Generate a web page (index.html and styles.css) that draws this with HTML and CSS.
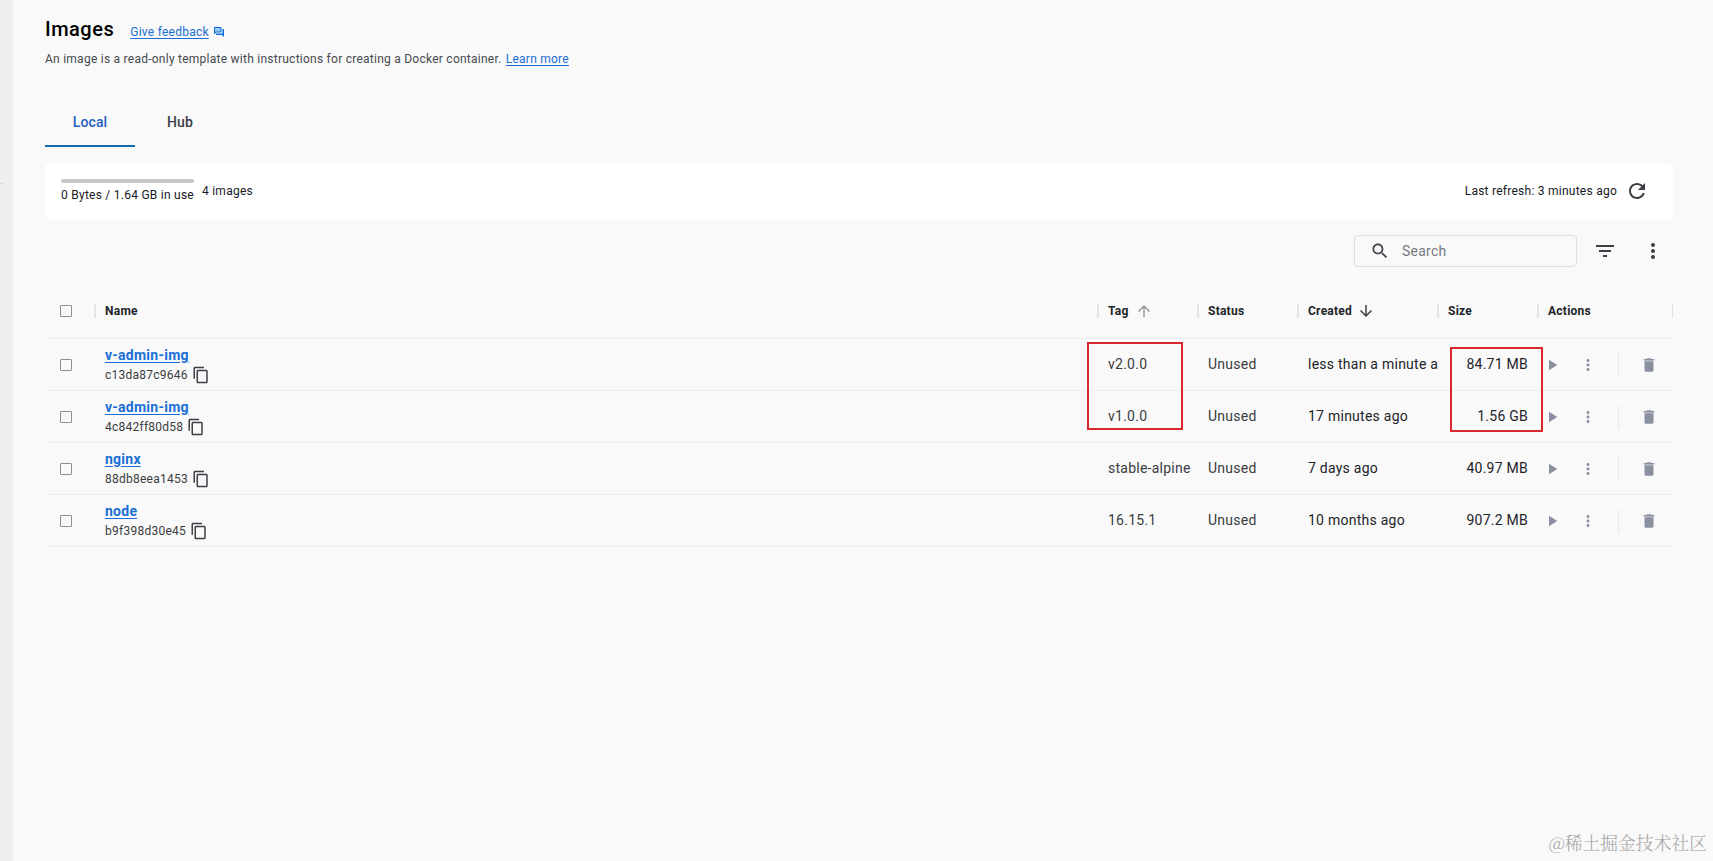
FILE: index.html
```html
<!DOCTYPE html>
<html lang="en">
<head>
    <meta charset="UTF-8">
    <meta name="viewport" content="width=device-width, initial-scale=1.0">
    <title>Images</title>
    <link rel="stylesheet" href="styles.css">
</head>
<body>
    <!-- shared icons -->
    <svg class="sprite" width="0" height="0">
        <symbol id="copy" viewBox="0 0 24 24"><path d="M16 1H4c-1.100 0-2 .9-2 2v14h2V3h12V1zm3 4H8c-1.100 0-2 .9-2 2v14c0 1.100.9 2 2 2h11c1.100 0 2-.9 2-2V7c0-1.100-.9-2-2-2zm0 16H8V7h11v14z"/></symbol>
        <symbol id="more" viewBox="0 0 24 24"><path d="M12 8c1.100 0 2-.9 2-2s-.9-2-2-2-2 .9-2 2 .9 2 2 2zm0 2c-1.100 0-2 .9-2 2s.9 2 2 2 2-.9 2-2-.9-2-2-2zm0 6c-1.100 0-2 .9-2 2s.9 2 2 2 2-.9 2-2-.9-2-2-2z"/></symbol>
        <symbol id="play" viewBox="0 0 24 24"><path d="M8 5v14l11-7z"/></symbol>
        <symbol id="trash" viewBox="0 0 24 24"><path d="M6 19c0 1.100.9 2 2 2h8c1.100 0 2-.9 2-2V7H6v12z"/><path d="M6 6h12v1H6z" opacity=".6"/><path d="M19 4h-3.500l-1-1h-5l-1 1H5v2h14V4z"/></symbol>
        <symbol id="arrow" viewBox="0 0 24 24"><path d="M4 12l1.410 1.410L11 7.830V20h2V7.830l5.580 5.590L20 12l-8-8-8 8z"/></symbol>
    </svg>

    <div class="sidebar"><div class="divider"></div></div>
    <main class="content">
        <div class="title-row">
            <h1>Images</h1>
            <a href="#" class="feedback">Give feedback</a>
            <svg class="feedback-icon" viewBox="0 0 24 24"><path d="M3 3h13v9H6l-3 3z" fill="#9cc8f5"/><path d="M15 4v7H5.170L4 12.170V4h11m1-2H3c-.55 0-1 .45-1 1v14l4-4h10c.55 0 1-.45 1-1V3c0-.55-.45-1-1-1zm5 4h-2v9H6v2c0 .55.45 1 1 1h11l4 4V7c0-.55-.45-1-1-1z"/></svg>
        </div>
        <p class="description">An image is a read-only template with instructions for creating a Docker container. <a href="#">Learn more</a></p>

        <div class="tabs">
            <div class="tab active">Local</div>
            <div class="tab">Hub</div>
        </div>

        <div class="usage">
            <div class="usage-disk">
                <div class="bar"></div>
                <span>0 Bytes / 1.64 GB in use</span>
            </div>
            <span class="count">4 images</span>
            <span class="refresh">Last refresh: 3 minutes ago</span>
            <svg class="icon-24" viewBox="0 0 24 24"><path d="M17.650 6.350C16.200 4.900 14.210 4 12 4c-4.420 0-7.990 3.580-7.990 8s3.570 8 7.990 8c3.730 0 6.840-2.550 7.730-6h-2.080c-.82 2.330-3.040 4-5.650 4-3.310 0-6-2.690-6-6s2.690-6 6-6c1.660 0 3.140.69 4.220 1.780L13 11h7V4l-2.350 2.350z"/></svg>
        </div>

        <div class="toolbar">
            <div class="search">
                <svg viewBox="0 0 24 24"><path d="M15.500 14h-.79l-.28-.27C15.410 12.590 16 11.110 16 9.500 16 5.910 13.090 3 9.500 3S3 5.910 3 9.500 5.910 16 9.500 16c1.610 0 3.090-.59 4.230-1.570l.27.28v.79l5 4.990L20.490 19l-4.990-5zm-6 0C7.010 14 5 11.990 5 9.500S7.010 5 9.500 5 14 7.010 14 9.500 11.990 14 9.500 14z"/></svg>
                <span>Search</span>
            </div>
            <svg class="icon-24 filter" viewBox="0 0 24 24"><path d="M10 18h4v-2h-4v2zM3 6v2h18V6H3zm3 7h12v-2H6v2z"/></svg>
            <svg class="icon-24 menu"><use href="#more"/></svg>
        </div>

        <div class="grid">
            <div class="row head">
                <div class="cell check"><span class="box"></span></div>
                <div class="cell">Name</div>
                <div class="cell">Tag <svg class="sort light"><use href="#arrow"/></svg></div>
                <div class="cell">Status</div>
                <div class="cell">Created <svg class="sort down"><use href="#arrow"/></svg></div>
                <div class="cell">Size</div>
                <div class="cell last">Actions</div>
            </div>
            <div class="row">
                <div class="cell check"><span class="box"></span></div>
                <div class="cell name"><a href="#">v-admin-img</a><div class="hash">c13da87c9646<svg><use href="#copy"/></svg></div></div>
                <div class="cell text">v2.0.0</div>
                <div class="cell text">Unused</div>
                <div class="cell text created">less than a minute a</div>
                <div class="cell text size">84.71 MB</div>
                <div class="cell actions"><svg class="play"><use href="#play"/></svg><svg class="more"><use href="#more"/></svg><i></i><svg class="trash"><use href="#trash"/></svg></div>
            </div>
            <div class="row">
                <div class="cell check"><span class="box"></span></div>
                <div class="cell name"><a href="#">v-admin-img</a><div class="hash">4c842ff80d58<svg><use href="#copy"/></svg></div></div>
                <div class="cell text">v1.0.0</div>
                <div class="cell text">Unused</div>
                <div class="cell text created">17 minutes ago</div>
                <div class="cell text size">1.56 GB</div>
                <div class="cell actions"><svg class="play"><use href="#play"/></svg><svg class="more"><use href="#more"/></svg><i></i><svg class="trash"><use href="#trash"/></svg></div>
            </div>
            <div class="row">
                <div class="cell check"><span class="box"></span></div>
                <div class="cell name"><a href="#">nginx</a><div class="hash">88db8eea1453<svg><use href="#copy"/></svg></div></div>
                <div class="cell text">stable-alpine</div>
                <div class="cell text">Unused</div>
                <div class="cell text created">7 days ago</div>
                <div class="cell text size">40.97 MB</div>
                <div class="cell actions"><svg class="play"><use href="#play"/></svg><svg class="more"><use href="#more"/></svg><i></i><svg class="trash"><use href="#trash"/></svg></div>
            </div>
            <div class="row">
                <div class="cell check"><span class="box"></span></div>
                <div class="cell name"><a href="#">node</a><div class="hash">b9f398d30e45<svg><use href="#copy"/></svg></div></div>
                <div class="cell text">16.15.1</div>
                <div class="cell text">Unused</div>
                <div class="cell text created">10 months ago</div>
                <div class="cell text size">907.2 MB</div>
                <div class="cell actions"><svg class="play"><use href="#play"/></svg><svg class="more"><use href="#more"/></svg><i></i><svg class="trash"><use href="#trash"/></svg></div>
            </div>
            <div class="mark mark-tag"></div>
            <div class="mark mark-size"></div>
        </div>
    </main>
    <div class="watermark">@稀土掘金技术社区</div>
</body>
</html>
```
FILE: styles.css
```css
* {
    box-sizing: border-box;
}

body {
    margin: 0;
    height: 861px;
    display: flex;
    overflow: hidden;
    background-color: #f9f9f9;
    font-family: Roboto, "Liberation Sans", sans-serif;
    font-size: 12px;
    letter-spacing: 0.25px;
    color: #17191e;
}

svg {
    fill: #3c3f45;
    flex: none;
}

a {
    color: #1a6fd6;
    text-underline-offset: 2px;
}

.sprite {
    position: absolute;
}

.sidebar {
    width: 13px;
    padding-top: 183px;
    background-color: #efeff1;
}

.divider {
    width: 4px;
    height: 1px;
    background-color: #dcdde0;
}

.content {
    flex: 1;
    padding: 16px 40px 0 32px;
}

.title-row {
    display: flex;
    align-items: center;
    height: 26px;
}

h1 {
    margin: 0 16px 0 0;
    font-size: 20px;
    font-weight: 500;
    line-height: 26px;
    letter-spacing: 0.5px;
    color: #000;
}

.feedback {
    margin-top: 5px;
}

.feedback-icon {
    width: 12px;
    height: 12px;
    margin: 6px 0 0 4px;
    fill: #086dd7;
}

.description {
    margin: 8px 0 0;
    line-height: 18px;
    color: #46494f;
}

.description a {
    margin-left: 1px;
}

.tabs {
    display: flex;
    height: 48px;
    margin-top: 31px;
    font-size: 14px;
    font-weight: 500;
    letter-spacing: 0.1px;
    color: #393f49;
}

.tab {
    width: 90px;
    line-height: 46px;
    text-align: center;
}

.active {
    color: #2560c5;
    border-bottom: 2px solid #116bac;
}

/* disk usage panel */
.usage {
    display: flex;
    align-items: center;
    height: 57px;
    margin-top: 16px;
    padding: 0 24px 2px 16px;
    border-radius: 6px;
    background-color: #fff;
}

.usage-disk {
    line-height: 16px;
    padding-top: 1px;
}

.bar {
    height: 4px;
    margin-bottom: 4px;
    border-radius: 2px;
    background-color: #c4c8cb;
}

.count {
    margin-left: 8px;
}

.refresh {
    margin-left: auto;
    margin-right: 8px;
}

.icon-24 {
    width: 24px;
    height: 24px;
}

.toolbar {
    display: flex;
    align-items: center;
    justify-content: flex-end;
    height: 32px;
    margin-top: 15px;
    padding-right: 8px;
}

.search {
    display: flex;
    align-items: center;
    width: 223px;
    height: 32px;
    padding-left: 15px;
    border: 1px solid #dcdee2;
    border-radius: 4px;
    font-size: 14px;
    color: #76797f;
}

.search svg {
    width: 20px;
    height: 20px;
    margin-right: 12px;
}

.filter {
    margin-left: 16px;
}

.menu {
    margin-left: 24px;
}

/* images table */
.grid {
    position: relative;
    margin-top: 18px;
}

.row {
    display: grid;
    grid-template-columns: 50px 1fr 100px 100px 140px 100px 135px;
    height: 52px;
    border-bottom: 1px solid #efeff0;
    font-size: 14px;
}

.cell {
    display: flex;
    align-items: center;
    padding-left: 10px;
    white-space: nowrap;
    color: #393c42;
}

.text {
    padding-bottom: 2px;
}

.head {
    height: 54px;
    align-items: center;
    padding-bottom: 2px;
    font-size: 12px;
    font-weight: 700;
}

.head .cell {
    height: 14px;
    margin-left: -1px;
    color: #222429;
    border-left: 2px solid #e3e4e6;
    padding-left: 9px;
}

.head .last {
    border-right: 1px solid #e1e2e6;
}

.row .check {
    margin-left: 0;
    border: 0;
    padding-left: 15px;
}

.box {
    width: 12px;
    height: 12px;
    border: 1px solid #8b8f98;
    border-radius: 1px;
}

.sort {
    width: 18px;
    height: 18px;
    margin-left: 5px;
}

.light {
    margin-left: 6px;
    opacity: 0.5;
}

.down {
    transform: rotate(180deg);
}

.name {
    flex-direction: column;
    align-items: flex-start;
    justify-content: center;
}

.name a {
    font-weight: 700;
    line-height: 18px;
}

.hash {
    display: flex;
    align-items: center;
    height: 18px;
    margin-top: 2px;
    font-size: 12px;
}

.hash svg {
    width: 18px;
    height: 18px;
    margin-left: 4px;
}

.size {
    justify-content: flex-end;
    padding-right: 10px;
    color: #222429;
}

.created {
    color: #222429;
}

.actions {
    padding-left: 5px;
}

.actions svg {
    width: 18px;
    height: 18px;
    fill: #8b90a0;
}

.actions .more {
    margin-left: 18px;
}

.actions i {
    width: 1px;
    height: 24px;
    margin: 0 21px;
    background-color: #e8e9eb;
}

.mark {
    position: absolute;
    border: 2px solid #d9272e;
}

.mark-tag {
    left: 1042px;
    top: 57px;
    width: 96px;
    height: 88px;
}

.mark-size {
    left: 1405px;
    top: 62px;
    width: 93px;
    height: 85px;
}

.watermark {
    position: absolute;
    right: 6px;
    bottom: 5px;
    font-family: "Noto Serif CJK SC", "Noto Sans CJK SC", serif;
    font-size: 17.8px;
    font-weight: 300;
    line-height: 26px;
    letter-spacing: 0;
    color: #a3a3a5;
}
```
